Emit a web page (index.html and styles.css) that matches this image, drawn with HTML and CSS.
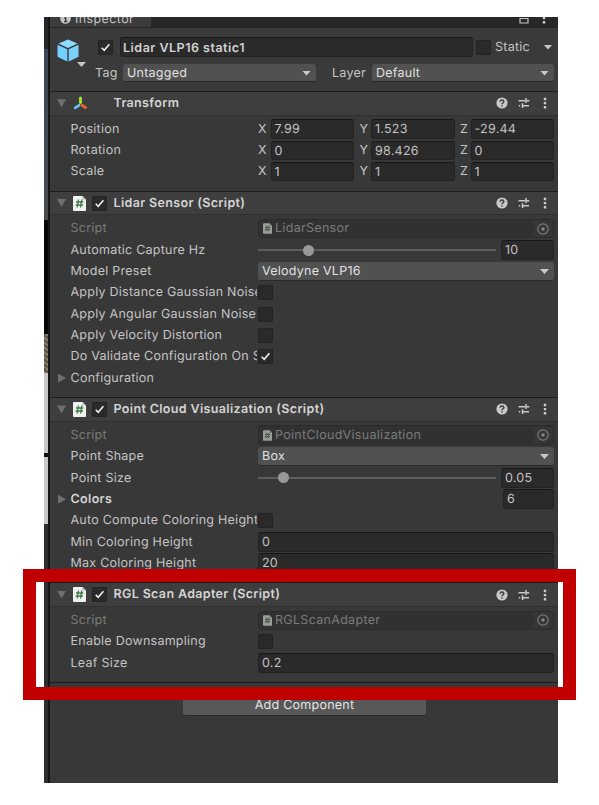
FILE: index.html
```
<!DOCTYPE html>
<html lang="en">
<head>
<meta charset="utf-8">
<title>Inspector</title>
<link rel="stylesheet" href="styles.css">
</head>
<body>
<svg class="defs" width="0" height="0">
  <symbol id="check" viewBox="0 0 15 15"><path d="M3.7 7.8 L6.2 10.3 L11.4 4.3" fill="none" stroke="#eee" stroke-width="1.6"/></symbol>
  <symbol id="script" viewBox="0 0 13 15"><path d="M0 1Q0 0 1 0H9.5L13 3.5V14Q13 15 12 15H1Q0 15 0 14Z" fill="#f1f1f1"/><path d="M9.5 0V3.5H13Z" fill="#bbb"/><path d="M5.500 3.500L4.200 11.500M8.800 3.500L7.500 11.500M3 6H10.300M2.700 9H10" fill="none" stroke="#3d7a43" stroke-width="1.3"/></symbol>
  <symbol id="help" viewBox="0 0 12 12"><circle cx="6" cy="6" r="5.6" fill="#c8c8c8"/><path d="M4.1 4.700Q4.200 3 6 3T7.900 4.600Q7.900 5.400 6.900 5.900Q6 6.300 6 7.200M6 8.200V9.500" fill="none" stroke="#3c3c3c" stroke-width="1.400"/></symbol>
  <symbol id="preset" viewBox="0 0 12 12"><path d="M.5 3.800H7M8 3.800H11.300M8 1V6M.8 8.700H2.200M4.500 8.700H11M4.500 6.300V11" fill="none" stroke="#c8c8c8" stroke-width="1.500"/></symbol>
  <symbol id="dots" viewBox="0 0 4 12"><path d="M.8 .8h2.400v2.400H.8zM.8 4.900h2.400v2.400H.8zM.8 9h2.400v2.400H.8z" fill="#ccc"/></symbol>
  <symbol id="target" viewBox="0 0 12 12"><circle cx="6" cy="6" r="5.200" fill="none" stroke="#7a7a7a" stroke-width="1.2"/><circle cx="6" cy="6" r="1.700" fill="#868686"/></symbol>
</svg>
<div class="window">
  <div class="scene"><i class="s1"></i><i class="s2"></i><i class="s3"></i><i class="s4"></i><i class="s5"></i></div>
  <main class="panel">
    <div class="tabs">
      <div class="tab"><svg width="11" height="11" viewBox="0 0 11 11"><circle cx="5.5" cy="5.5" r="5.3" fill="#c4c4c4"/><path d="M5.5 2V3.4M4.2 5H5.7V8.5M4 8.5H7.2" fill="none" stroke="#3c3c3c" stroke-width="1.3"/></svg><span>Inspector</span></div>
      <svg class="lock" width="10" height="12" viewBox="0 0 10 12"><path d="M1 4.500H9V9H1Z" fill="none" stroke="#c4c4c4" stroke-width="1.2"/></svg>
      <svg class="tabdots" width="4" height="12"><use href="#dots"/></svg>
    </div>
    <div class="object">
      <div class="cube"><svg width="22" height="23" viewBox="0 0 22 23"><path d="M11 .5L20.5 4.5L11 9L1.500 4.500Z" fill="#8ddcff"/><path d="M.5 5.800L10.300 10.300V22.500L.5 17.800Z" fill="#74ceff"/><path d="M21.500 5.800L11.700 10.300V22.500L21.500 17.800Z" fill="#7ad2fb"/></svg><b class="down"></b></div>
      <div class="objmain">
        <div class="namerow"><span class="check"><svg width="15" height="15"><use href="#check"/></svg></span><div class="input name">Lidar VLP16 static1</div><span class="check"></span><span class="static">Static</span><b class="down"></b></div>
        <div class="tagrow"><span class="taglabel">Tag</span><div class="select tag">Untagged<b class="down"></b></div><span class="layerlabel">Layer</span><div class="select layer">Default<b class="down"></b></div></div>
      </div>
    </div>

    <section>
      <header><b class="fold open"></b><svg class="axes" width="15" height="15" viewBox="0 0 15 15"><path d="M7.500 2V6.500" stroke="#9be234" stroke-width="3" stroke-linecap="round"/><path d="M6 9.300L2.200 11.800" stroke="#62c4f5" stroke-width="2.800" stroke-linecap="round"/><path d="M9 9.300L12.500 11.500" stroke="#f0602e" stroke-width="3" stroke-linecap="round"/></svg><h2>Transform</h2><svg class="help" width="12" height="12"><use href="#help"/></svg><svg class="preset" width="12" height="12"><use href="#preset"/></svg><svg width="4" height="12"><use href="#dots"/></svg></header>
      <div class="rows">
        <div class="row"><label>Position</label><div class="vec"><span>X</span><div class="input">7.99</div><span>Y</span><div class="input">1.523</div><span>Z</span><div class="input">-29.44</div></div></div>
        <div class="row"><label>Rotation</label><div class="vec"><span>X</span><div class="input">0</div><span>Y</span><div class="input">98.426</div><span>Z</span><div class="input">0</div></div></div>
        <div class="row"><label>Scale</label><div class="vec"><span>X</span><div class="input">1</div><span>Y</span><div class="input">1</div><span>Z</span><div class="input">1</div></div></div>
      </div>
    </section>

    <section>
      <header><b class="fold open"></b><svg class="script" width="13" height="15"><use href="#script"/></svg><span class="check"><svg width="15" height="15"><use href="#check"/></svg></span><h2>Lidar Sensor (Script)</h2><svg class="help" width="12" height="12"><use href="#help"/></svg><svg class="preset" width="12" height="12"><use href="#preset"/></svg><svg width="4" height="12"><use href="#dots"/></svg></header>
      <div class="rows">
        <div class="row off"><label>Script</label><div class="object-field"><svg class="mini" width="9" height="11"><use href="#script"/></svg><span>LidarSensor</span><em><svg width="12" height="12"><use href="#target"/></svg></em></div></div>
        <div class="row"><label>Automatic Capture Hz</label><div class="slider"><i class="knob k10"></i></div><div class="input num">10</div></div>
        <div class="row"><label>Model Preset</label><div class="select">Velodyne VLP16<b class="down"></b></div></div>
        <div class="row"><label>Apply Distance Gaussian Noise</label><span class="check"></span></div>
        <div class="row"><label>Apply Angular Gaussian Noise</label><span class="check"></span></div>
        <div class="row"><label>Apply Velocity Distortion</label><span class="check"></span></div>
        <div class="row"><label>Do Validate Configuration On S</label><span class="check"><svg width="15" height="15"><use href="#check"/></svg></span></div>
        <div class="row folded"><b class="fold"></b><label>Configuration</label></div>
      </div>
    </section>

    <section>
      <header><b class="fold open"></b><svg class="script" width="13" height="15"><use href="#script"/></svg><span class="check"><svg width="15" height="15"><use href="#check"/></svg></span><h2>Point Cloud Visualization (Script)</h2><svg class="help" width="12" height="12"><use href="#help"/></svg><svg class="preset" width="12" height="12"><use href="#preset"/></svg><svg width="4" height="12"><use href="#dots"/></svg></header>
      <div class="rows">
        <div class="row off"><label>Script</label><div class="object-field"><svg class="mini" width="9" height="11"><use href="#script"/></svg><span>PointCloudVisualization</span><em><svg width="12" height="12"><use href="#target"/></svg></em></div></div>
        <div class="row"><label>Point Shape</label><div class="select">Box<b class="down"></b></div></div>
        <div class="row"><label>Point Size</label><div class="slider"><i class="knob k005"></i></div><div class="input num">0.05</div></div>
        <div class="row folded"><b class="fold"></b><label class="bold">Colors</label><div class="input num count">6</div></div>
        <div class="row"><label>Auto Compute Coloring Height</label><span class="check"></span></div>
        <div class="row"><label>Min Coloring Height</label><div class="input">0</div></div>
        <div class="row"><label>Max Coloring Height</label><div class="input">20</div></div>
      </div>
    </section>

    <section>
      <header><b class="fold open"></b><svg class="script" width="13" height="15"><use href="#script"/></svg><span class="check"><svg width="15" height="15"><use href="#check"/></svg></span><h2>RGL Scan Adapter (Script)</h2><svg class="help" width="12" height="12"><use href="#help"/></svg><svg class="preset" width="12" height="12"><use href="#preset"/></svg><svg width="4" height="12"><use href="#dots"/></svg></header>
      <div class="rows">
        <div class="row off"><label>Script</label><div class="object-field"><svg class="mini" width="9" height="11"><use href="#script"/></svg><span>RGLScanAdapter</span><em><svg width="12" height="12"><use href="#target"/></svg></em></div></div>
        <div class="row"><label>Enable Downsampling</label><span class="check"></span></div>
        <div class="row"><label>Leaf Size</label><div class="input">0.2</div></div>
      </div>
    </section>
    <div class="footer"><div class="add">Add Component</div></div>
  </main>
</div>
<div class="highlight"></div>
</body>
</html>
```
FILE: styles.css
```
* { box-sizing: border-box; }
body { margin: 0; padding: 17px 0 0 44px; background: #fff; font: 12.5px/18px Inter, sans-serif; letter-spacing: .25px; text-rendering: geometricPrecision; color: #c4c4c4; height: 805px; overflow: hidden; }
.defs { position: absolute; }
svg { display: block; flex: none; }
.window { width: 514px; height: 766px; display: flex; overflow: hidden; background: #383838; }
.scene { width: 6px; flex: none; display: flex; flex-direction: column; border-right: 2px solid #151515; background: #2d2e30; }
.scene i { display: block; }
.s1 { height: 32px; background: #252629; }
.s2 { height: 171px; background: linear-gradient(#3c4654, #444a54 60%, #4a4b4d); }
.s3 { height: 114px; background: #070707; }
.s4 { height: 39px; background: repeating-linear-gradient(35deg, #85796a 0 2px, #5b5348 2px 4px); }
.s5 { height: 151px; background: linear-gradient(#c8c6c7 0 80px, #111 80px 84px, #c8c6c7 84px); }
.panel { flex: 1; min-width: 0; }

.tabs { height: 11px; display: flex; align-items: flex-start; background: #282828; border-bottom: 1px solid #242424; padding-right: 12px; overflow: hidden; }
.tab { width: 101px; height: 11px; background: #3c3c3c; display: flex; padding-left: 10px; gap: 4px; }
.tab svg { margin-top: -4px; }
.tab span { margin-top: -6px; letter-spacing: .4px; }
.lock { margin: -3px 13px 0 auto; }
.tabdots { margin-top: -5px; }

.object { height: 63px; background: #3a3a3a; display: flex; }
.cube { width: 48px; padding: 11px 0 0 7px; flex: none; }
.cube .down { margin: 0 0 0 20px; }
.down { display: block; flex: none; width: 9px; height: 5px; background: #c8c8c8; clip-path: polygon(0 0, 100% 0, 50% 100%); }
.objmain { flex: 1; padding-right: 4px; }
.namerow { display: flex; align-items: center; height: 20px; margin-top: 9px; }
.namerow .name { flex: none; width: 353px; margin: 0 3px 0 7px; height: 20px; font-weight: 600; letter-spacing: .5px; color: #d2d2d2; line-height: 21px; padding-left: 2px; }
.static { margin-left: 4px; padding-top: 2px; }
.namerow .down { margin-left: auto; margin-right: 1.5px; }
.tagrow { display: flex; align-items: center; height: 20px; margin-top: 6px; }
.taglabel { width: 25px; margin-left: -3px; margin-right: 3px; padding-top: 2px; }
.layerlabel { margin-left: 16px; width: 40px; padding-top: 2px; }
.select.tag { flex: none; width: 193px; }

.check { flex: none; width: 15px; height: 15px; border-radius: 2px; background: #2a2a2a; box-shadow: inset 0 0 0 1px #232323; }
.input { flex: 1; min-width: 0; height: 19.500px; padding-left: 3px; border-radius: 3px; background: #2a2a2a; border: 1px solid #222; border-top-color: #171717; overflow: hidden; white-space: nowrap; line-height: 19.500px; }
.select { flex: 1; height: 18.500px; line-height: 17px; padding: 1px 5px 0 4px; border-radius: 3px; background: #515151; border-bottom: 1px solid #2a2a2a; color: #e0e0e0; display: flex; align-items: center; justify-content: space-between; }

section { border-top: 1px solid #1c1c1c; padding-bottom: 8.500px; }
header { height: 23.500px; background: #3e3e3e; border-bottom: 1px solid #303030; display: flex; align-items: center; padding: 0 11px 0 7px; }
header h2 { font-size: 12.5px; font-weight: 600; margin: 1.500px 0 0 6.500px; letter-spacing: .35px; color: #d4d4d4; }
.help { margin-left: auto; margin-right: 9.500px; }
.preset { margin-right: 13.500px; }
.script { margin: 0 6px 0 7px; }
.axes { margin: 0 19px 0 7px; }
.fold { display: block; flex: none; width: 8px; height: 9px; background: #6f6f6f; clip-path: polygon(0 0, 100% 50%, 0 100%); }
.fold.open { width: 9px; height: 8px; clip-path: polygon(0 0, 100% 0, 50% 100%); }
.rows { padding: 2.800px 4px 0 0; }
.row { height: 21.333px; display: flex; align-items: center; padding-left: 20.500px; }
.row label { flex: none; width: 186px; margin-right: 1.500px; padding-top: 1.500px; overflow: hidden; white-space: nowrap; }
.row.folded { padding-left: 8px; }
.row.folded label { margin-left: 4.500px; }
label.bold { font-weight: 600; color: #d4d4d4; letter-spacing: .35px; }
.off { color: #7b7b7b; }
.vec { flex: 1; display: grid; grid-template-columns: 12.500px 83.500px 17px 83.500px 16px 83.500px; align-items: center; }
.vec span { padding-top: 1.500px; }
.vec .input + span { padding-left: 5.500px; }
.object-field { flex: 1; height: 19.500px; border: 1px solid #2b2b2b; border-radius: 3px; background: #313131; display: flex; align-items: center; padding-left: 4px; }
.object-field span { margin-left: 3px; padding-top: 1.500px; letter-spacing: .3px; }
.object-field em { margin-left: auto; width: 20px; height: 17px; background: #363636; display: grid; place-items: center; }
.mini { opacity: .55; }
.slider { flex: 1; height: 2.500px; background: #5e5e5e; margin-right: 5px; }
.knob { display: block; width: 11px; height: 11px; border-radius: 50%; background: #999; margin-top: -4.250px; }
.k10 { margin-left: 45px; }
.k005 { margin-left: 20px; }
.num { flex: none; width: 53px; }
.num.count { margin-left: auto; width: 51px; }
.footer { border-top: 1px solid #1c1c1c; padding-top: 10px; }
.add { width: 243px; height: 23px; margin: 0 auto 0 133px; border-radius: 3px; background: #585858; border-bottom: 1px solid #2a2a2a; text-align: center; line-height: 25px; color: #e6e6e6; }
.highlight { position: absolute; left: 23px; top: 569px; width: 553px; height: 131px; border: 13px solid #c00000; }
```
